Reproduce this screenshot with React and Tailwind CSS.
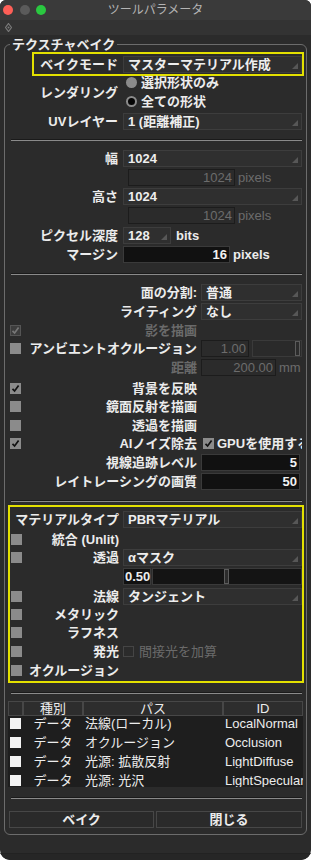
const SANS = "font-['Liberation_Sans','Noto_Sans_CJK_JP',sans-serif]";

function Tri() {
  return (
    <svg width="6" height="6" viewBox="0 0 6 6" className="absolute bottom-[3px] right-[3px]">
      <polygon points="6,0 6,6 0,6" fill="#575757" />
    </svg>
  );
}

function Drop({ children, w = 'w-[179px]' }) {
  return (
    <div className={`relative flex h-[17px] ${w} shrink-0 items-center overflow-hidden border border-[#3d3d3d] bg-[#2f2f2f] pl-[4px] text-[13px] font-bold leading-none text-[#eeeeee]`}>
      <span className="whitespace-nowrap">{children}</span>
      <Tri />
    </div>
  );
}

function Dim({ children, w }) {
  return (
    <div className={`flex h-[17px] ${w} shrink-0 items-center justify-end border border-[#1c1c1c] bg-[#2b2b2b] pr-[2px] text-[13px] leading-none text-[#6c6c6c]`}>
      {children}
    </div>
  );
}

function Black({ children, w }) {
  return (
    <div className={`flex h-[17px] ${w} shrink-0 items-center justify-end border border-[#3a3a3a] bg-[#111111] pr-[2px] text-[13px] font-bold leading-none text-[#f2f2f2]`}>
      {children}
    </div>
  );
}

function Tick({ color }) {
  return (
    <svg width="9" height="9" viewBox="0 0 9 9">
      <path d="M1.5 4.8 L3.6 7 L7.6 1.6" fill="none" stroke={color} strokeWidth="1.7" />
    </svg>
  );
}

function Check({ kind = 'off', className = '' }) {
  if (kind === 'on')
    return (
      <div className={`flex h-[11px] w-[11px] shrink-0 items-center justify-center bg-[#8b8b8b] ${className}`}>
        <Tick color="#111111" />
      </div>
    );
  if (kind === 'dis')
    return (
      <div className={`flex h-[11px] w-[11px] shrink-0 items-center justify-center border border-[#555555] bg-[#3d3d3d] ${className}`}>
        <Tick color="#777777" />
      </div>
    );
  if (kind === 'disoff')
    return <div className={`h-[11px] w-[11px] shrink-0 border border-[#454545] bg-[#2b2b2b] ${className}`} />;
  if (kind === 'white') return <div className={`h-[11px] w-[11px] shrink-0 bg-[#f4f4f4] ${className}`} />;
  return <div className={`h-[11px] w-[11px] shrink-0 bg-[#8b8b8b] ${className}`} />;
}

function Sep({ className = '' }) {
  return <div className={`ml-[6px] h-[2px] w-[291px] border-t border-[#1a1a1a] bg-[#8a8a8a] ${className}`} />;
}

function Slider({ w, pos, dark }) {
  return (
    <div className={`flex h-[17px] ${w} shrink-0 items-center border border-[#3a3a3a] ${dark ? 'bg-[#141414]' : 'bg-[#2a2a2a]'} ${pos}`}>
      <div className="h-[15px] w-[5px] border border-[#5c5c5c] bg-[#2c2c2c]" />
    </div>
  );
}

const rows = [
  ['データ', '法線(ローカル)', 'LocalNormal'],
  ['データ', 'オクルージョン', 'Occlusion'],
  ['データ', '光源: 拡散反射', 'LightDiffuse'],
  ['データ', '光源: 光沢', 'LightSpecular'],
];

export default function App() {
  return (
    <div className="min-h-screen bg-white">
      <div className={`flex h-[860px] w-[311px] flex-col overflow-hidden rounded-t-[6px] rounded-b-[10px] bg-[#2b2b2b] ${SANS} text-[13px] text-[#ececec]`}>
        {/* title bar */}
        <div className="grid h-[20px] shrink-0 grid-cols-[1fr_auto_1fr] items-center bg-[#3a3a3a]">
          <div className="flex items-center pl-[3px]">
            <span className="h-[10px] w-[10px] rounded-full bg-[#fe5f57]" />
            <span className="ml-[7px] h-[10px] w-[10px] rounded-full bg-[#5b5b5b]" />
            <span className="ml-[6px] h-[10px] w-[10px] rounded-full bg-[#2ac840]" />
          </div>
          <div className="text-[12px] leading-none text-[#b4b4b4]">ツールパラメータ</div>
          <div />
        </div>
        {/* toolbar */}
        <div className="flex h-[15px] shrink-0 items-center bg-[#333333] pl-[5px]">
          <svg width="7" height="9" viewBox="0 0 7 9">
            <path d="M3.5 0.5 L6.5 4.5 L3.5 8.5 L0.5 4.5 Z" fill="none" stroke="#7a7a7a" strokeWidth="1.2" />
            <circle cx="3.5" cy="4.5" r="1" fill="#7a7a7a" />
          </svg>
        </div>

        <fieldset className="mx-[4px] mt-[2px] rounded-[6px] border border-[#6c6c6c] pb-[6px]">
          <legend className="ml-[5px] px-[2px] text-[13px] font-bold leading-[15px]">テクスチャベイク</legend>

          {/* bake mode */}
          <div className="ml-[27px] h-[24px] w-[272px] border-2 border-[#e3e000]">
            <div className="mt-[2px] flex h-[17px] items-center">
              <div className="w-[84px] text-right font-bold leading-none">ベイクモード</div>
              <div className="ml-[5px]">
                <Drop>マスターマテリアル作成</Drop>
              </div>
            </div>
          </div>

          {/* rendering */}
          <div className="flex h-[32px] items-center">
            <div className="w-[113px] text-right font-bold leading-none">レンダリング</div>
            <div className="ml-[5px] flex flex-col pl-[3px] font-bold leading-none">
              <div className="flex h-[13px] items-center">
                <span className="h-[11px] w-[11px] rounded-full bg-[#8b8b8b]" />
                <span className="ml-[4px]">選択形状のみ</span>
              </div>
              <div className="mt-[6px] flex h-[13px] items-center">
                <span className="h-[11px] w-[11px] rounded-full border-2 border-[#8b8b8b] bg-[#050505]" />
                <span className="ml-[4px]">全ての形状</span>
              </div>
            </div>
          </div>

          <div className="mt-[5px] flex h-[17px] items-center">
            <div className="w-[113px] text-right font-bold leading-none">UVレイヤー</div>
            <div className="ml-[5px]">
              <Drop>1 (距離補正)</Drop>
            </div>
          </div>

          <Sep className="mt-[9px]" />

          <div className="mt-[9px] flex h-[17px] items-center">
            <div className="w-[113px] text-right font-bold leading-none">幅</div>
            <div className="ml-[5px]">
              <Drop>1024</Drop>
            </div>
          </div>
          <div className="mt-[2px] flex h-[17px] items-center pl-[118px]">
            <div className="ml-[5px] flex items-center">
              <Dim w="w-[107px]">1024</Dim>
              <span className="ml-[3px] leading-none text-[#6c6c6c]">pixels</span>
            </div>
          </div>
          <div className="mt-[2px] flex h-[17px] items-center">
            <div className="w-[113px] text-right font-bold leading-none">高さ</div>
            <div className="ml-[5px]">
              <Drop>1024</Drop>
            </div>
          </div>
          <div className="mt-[2px] flex h-[17px] items-center pl-[118px]">
            <div className="ml-[5px] flex items-center">
              <Dim w="w-[107px]">1024</Dim>
              <span className="ml-[3px] leading-none text-[#6c6c6c]">pixels</span>
            </div>
          </div>
          <div className="mt-[3px] flex h-[17px] items-center">
            <div className="w-[113px] text-right font-bold leading-none">ピクセル深度</div>
            <div className="ml-[5px] flex items-center">
              <Drop w="w-[48px]">128</Drop>
              <span className="ml-[5px] font-bold leading-none">bits</span>
            </div>
          </div>
          <div className="mt-[2px] flex h-[17px] items-center">
            <div className="w-[113px] text-right font-bold leading-none">マージン</div>
            <div className="ml-[5px] flex items-center">
              <Black w="w-[107px]">16</Black>
              <span className="ml-[3px] font-bold leading-none">pixels</span>
            </div>
          </div>

          <Sep className="mt-[10px]" />

          <div className="mt-[9px] flex h-[17px] items-center">
            <div className="w-[192px] text-right font-bold leading-none">面の分割:</div>
            <div className="ml-[4px]">
              <Drop w="w-[101px]">普通</Drop>
            </div>
          </div>
          <div className="mt-[2px] flex h-[17px] items-center">
            <div className="w-[192px] text-right font-bold leading-none">ライティング</div>
            <div className="ml-[4px]">
              <Drop w="w-[101px]">なし</Drop>
            </div>
          </div>
          <div className="mt-[2px] flex h-[17px] items-center">
            <div className="flex w-[192px] items-center">
              <Check kind="dis" className="ml-[5px]" />
              <span className="ml-auto font-bold leading-none text-[#6a6a6a]">影を描画</span>
            </div>
          </div>
          <div className="mt-[1px] flex h-[17px] items-center">
            <div className="flex w-[192px] items-center">
              <Check className="ml-[5px]" />
              <span className="ml-auto font-bold leading-none">アンビエントオクルージョン</span>
            </div>
            <div className="ml-[4px] flex items-center">
              <Dim w="w-[48px]">1.00</Dim>
              <Slider w="w-[50px] ml-[3px]" pos="justify-end pr-[1px]" />
            </div>
          </div>
          <div className="mt-[2px] flex h-[17px] items-center">
            <div className="w-[192px] text-right font-bold leading-none text-[#6a6a6a]">距離</div>
            <div className="ml-[4px] flex items-center">
              <Dim w="w-[75px]">200.00</Dim>
              <span className="ml-[3px] leading-none text-[#6c6c6c]">mm</span>
            </div>
          </div>
          <div className="mt-[3px] flex h-[18px] items-center">
            <div className="flex w-[192px] items-center">
              <Check kind="on" className="ml-[5px]" />
              <span className="ml-auto font-bold leading-none">背景を反映</span>
            </div>
          </div>
          <div className="flex h-[19px] items-center">
            <div className="flex w-[192px] items-center">
              <Check className="ml-[5px]" />
              <span className="ml-auto font-bold leading-none">鏡面反射を描画</span>
            </div>
          </div>
          <div className="flex h-[18px] items-center">
            <div className="flex w-[192px] items-center">
              <Check className="ml-[5px]" />
              <span className="ml-auto font-bold leading-none">透過を描画</span>
            </div>
          </div>
          <div className="flex h-[19px] items-center">
            <div className="flex w-[192px] items-center">
              <Check kind="on" className="ml-[5px]" />
              <span className="ml-auto font-bold leading-none">AIノイズ除去</span>
            </div>
            <div className="ml-[6px] flex w-[99px] items-center overflow-hidden whitespace-nowrap">
              <Check kind="on" />
              <span className="ml-[3px] font-bold leading-none">GPUを使用する</span>
            </div>
          </div>
          <div className="mt-[1px] flex h-[17px] items-center">
            <div className="w-[192px] text-right font-bold leading-none">視線追跡レベル</div>
            <div className="ml-[4px]">
              <Black w="w-[99px]">5</Black>
            </div>
          </div>
          <div className="mt-[2px] flex h-[17px] items-center">
            <div className="w-[192px] text-right font-bold leading-none">レイトレーシングの画質</div>
            <div className="ml-[4px]">
              <Black w="w-[99px]">50</Black>
            </div>
          </div>

          <Sep className="mt-[10px]" />

          {/* material box */}
          <div className="ml-[3px] mt-[3px] h-[178px] w-[296px] border-2 border-[#e3e000] font-bold">
            <div className="mt-[4px] flex h-[17px] items-center">
              <div className="w-[109px] text-right leading-none">マテリアルタイプ</div>
              <div className="ml-[4px]">
                <Drop>PBRマテリアル</Drop>
              </div>
            </div>
            <div className="mt-[2px] flex h-[18px] items-center">
              <div className="flex w-[109px] items-center">
                <Check className="ml-[1px]" />
                <span className="ml-auto leading-none">統合 (Unlit)</span>
              </div>
            </div>
            <div className="mt-[1px] flex h-[17px] items-center">
              <div className="flex w-[109px] items-center">
                <Check className="ml-[1px]" />
                <span className="ml-auto leading-none">透過</span>
              </div>
              <div className="ml-[4px]">
                <Drop>αマスク</Drop>
              </div>
            </div>
            <div className="mt-[2px] flex h-[17px] items-center pl-[113px]">
              <div className="flex h-[17px] w-[28px] items-center border border-[#3a3a3a] bg-[#111111] pl-[1px] leading-none">0.50</div>
              <Slider w="w-[150px] ml-[1px]" pos="pl-[71px]" dark />
            </div>
            <div className="mt-[3px] flex h-[17px] items-center">
              <div className="flex w-[109px] items-center">
                <Check className="ml-[1px]" />
                <span className="ml-auto leading-none">法線</span>
              </div>
              <div className="ml-[4px]">
                <Drop>タンジェント</Drop>
              </div>
            </div>
            <div className="flex h-[18px] items-center">
              <div className="flex w-[109px] items-center">
                <Check className="ml-[1px]" />
                <span className="ml-auto leading-none">メタリック</span>
              </div>
            </div>
            <div className="flex h-[19px] items-center">
              <div className="flex w-[109px] items-center">
                <Check className="ml-[1px]" />
                <span className="ml-auto leading-none">ラフネス</span>
              </div>
            </div>
            <div className="flex h-[19px] items-center">
              <div className="flex w-[109px] items-center">
                <Check className="ml-[1px]" />
                <span className="ml-auto leading-none">発光</span>
              </div>
              <div className="ml-[4px] flex items-center">
                <Check kind="disoff" />
                <span className="ml-[5px] font-normal leading-none text-[#6a6a6a]">間接光を加算</span>
              </div>
            </div>
            <div className="flex h-[19px] items-center">
              <div className="flex w-[109px] items-center">
                <Check className="ml-[1px]" />
                <span className="ml-auto leading-none">オクルージョン</span>
              </div>
            </div>
          </div>

          <Sep className="mt-[9px]" />

          {/* pass table */}
          <div className="ml-[3px] mt-[7px] w-[295px]">
            <div className="flex h-[15px] leading-none">
              <div className="w-[15px] border border-[#474747] bg-[#2d2d2d]" />
              <div className="flex w-[60px] items-center justify-center border border-[#474747] bg-[#2d2d2d]">種別</div>
              <div className="flex w-[140px] items-center justify-center border border-[#474747] bg-[#2d2d2d]">パス</div>
              <div className="flex w-[80px] items-center justify-center border border-[#474747] bg-[#2d2d2d]">ID</div>
            </div>
            <div className="h-[71px] overflow-hidden bg-[#1e1e1e]">
              <div className="-mt-[2px]">
                {rows.map((r) => (
                  <div key={r[2]} className="flex h-[19px] items-center whitespace-nowrap leading-none">
                    <div className="flex w-[15px] justify-center">
                      <Check kind="white" />
                    </div>
                    <div className="w-[60px] text-center">{r[0]}</div>
                    <div className="w-[140px] pl-[2px]">{r[1]}</div>
                    <div className="w-[80px] overflow-hidden pl-[2px]">{r[2]}</div>
                  </div>
                ))}
              </div>
            </div>
          </div>

          <Sep className="mt-[10px]" />

          <div className="ml-[4px] mt-[12px] flex gap-[2px] font-bold">
            <button className="flex h-[17px] w-[145px] items-center justify-center border border-[#474747] bg-[#2a2a2a] leading-none">ベイク</button>
            <button className="flex h-[17px] w-[146px] items-center justify-center border border-[#474747] bg-[#2a2a2a] leading-none">閉じる</button>
          </div>
        </fieldset>

        <div className="flex-1" />
        <div className="h-[7px] border-t border-[#222222] bg-[#262626]" />
      </div>
    </div>
  );
}
